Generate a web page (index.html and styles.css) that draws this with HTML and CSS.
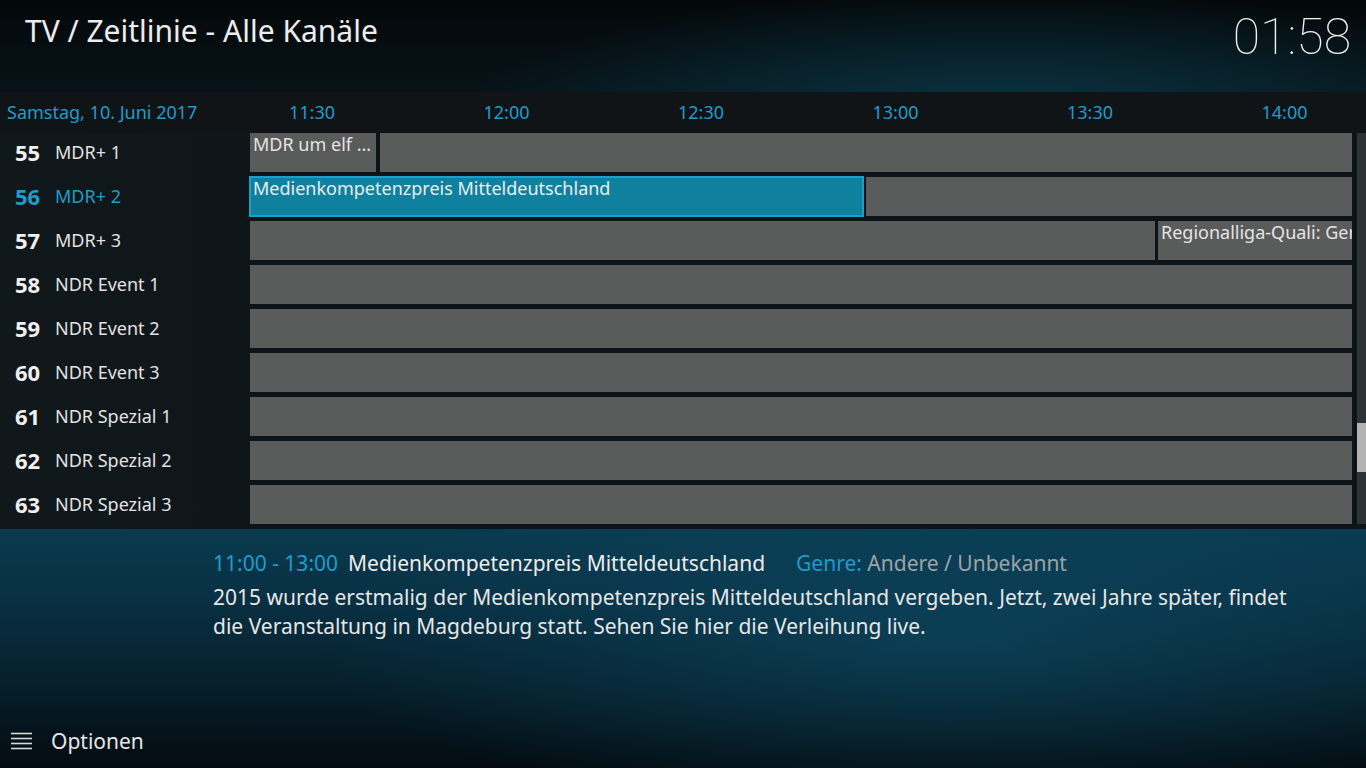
FILE: index.html
```html
<!DOCTYPE html>
<html lang="de">
<head>
<meta charset="utf-8">
<title>TV / Zeitlinie</title>
<link rel="stylesheet" href="styles.css">
</head>
<body>
<div class="screen">
  <header class="top">
    <h1 class="title">TV / Zeitlinie - Alle Kanäle</h1>
    <div class="clock">01:58</div>
  </header>

  <section class="guide">
    <div class="timebar">
      <div class="date">Samstag, 10. Juni 2017</div>
      <div class="times">
        <span>11:30</span><span>12:00</span><span>12:30</span><span>13:00</span><span>13:30</span><span>14:00</span>
      </div>
    </div>
    <div class="body">
      <div class="channels">
        <div class="ch"><b>55</b><span>MDR+ 1</span></div>
        <div class="ch sel"><b>56</b><span>MDR+ 2</span></div>
        <div class="ch"><b>57</b><span>MDR+ 3</span></div>
        <div class="ch"><b>58</b><span>NDR Event 1</span></div>
        <div class="ch"><b>59</b><span>NDR Event 2</span></div>
        <div class="ch"><b>60</b><span>NDR Event 3</span></div>
        <div class="ch"><b>61</b><span>NDR Spezial 1</span></div>
        <div class="ch"><b>62</b><span>NDR Spezial 2</span></div>
        <div class="ch"><b>63</b><span>NDR Spezial 3</span></div>
      </div>
      <div class="grid">
        <div class="row">
          <div class="prog" style="width:126px">MDR um elf ...</div>
          <div class="prog fill"></div>
        </div>
        <div class="row">
          <div class="prog active" style="width:615px">Medienkompetenzpreis Mitteldeutschland</div>
          <div class="prog fill"></div>
        </div>
        <div class="row">
          <div class="prog" style="width:905px"></div>
          <div class="prog fill">Regionalliga-Quali: Ger</div>
        </div>
        <div class="row"><div class="prog fill"></div></div>
        <div class="row"><div class="prog fill"></div></div>
        <div class="row"><div class="prog fill"></div></div>
        <div class="row"><div class="prog fill"></div></div>
        <div class="row"><div class="prog fill"></div></div>
        <div class="row"><div class="prog fill"></div></div>
      </div>
      <div class="scrollbar"><div class="thumb"></div></div>
    </div>
  </section>

  <section class="info">
    <div class="info-head">
      <span class="blue">11:00 - 13:00</span>
      <span class="name">Medienkompetenzpreis Mitteldeutschland</span>
      <span class="genre"><span class="blue">Genre:</span> Andere / Unbekannt</span>
    </div>
    <p class="desc">2015 wurde erstmalig der Medienkompetenzpreis Mitteldeutschland vergeben. Jetzt, zwei Jahre später, findet die Veranstaltung in Magdeburg statt. Sehen Sie hier die Verleihung live.</p>
  </section>

  <footer class="bottom">
    <svg class="menu-icon" width="22" height="18" viewBox="0 0 22 18">
      <g stroke="#d8d8d8" stroke-width="1.6">
        <line x1="0" y1="1.5" x2="21" y2="1.5"/>
        <line x1="0" y1="6.5" x2="21" y2="6.5"/>
        <line x1="0" y1="11.5" x2="21" y2="11.5"/>
        <line x1="0" y1="16.5" x2="21" y2="16.5"/>
      </g>
    </svg>
    <span class="opt">Optionen</span>
  </footer>
</div>
</body>
</html>
```

FILE: styles.css
```css
* { box-sizing: border-box; }
html, body { margin: 0; padding: 0; }
body {
  width: 1366px;
  height: 768px;
  overflow: hidden;
  font-family: "Noto Sans", "Open Sans", sans-serif;
  color: #e6e6e6;
  background: #03080b;
}
.screen {
  width: 1366px;
  height: 768px;
  overflow: hidden;
  display: flex;
  flex-direction: column;
  background:
    radial-gradient(ellipse 900px 260px at 950px 640px, rgba(14, 80, 108, 0.55), rgba(14, 80, 108, 0) 70%),
    linear-gradient(180deg, #0a3a4f 529px, #083043 600px, #06202c 680px, #030b10 768px);
}
.screen > * { flex: none; }
.top {
  height: 92px;
  display: flex;
  justify-content: space-between;
  align-items: flex-start;
  padding: 0 15px 0 25px;
  background:
    radial-gradient(ellipse 700px 160px at 1000px 110px, rgba(10, 62, 80, 0.75), rgba(10, 62, 80, 0) 75%),
    linear-gradient(180deg, #04080a 0%, #071318 100%);
}
.title {
  margin: 10px 0 0;
  font-weight: 400;
  font-size: 30px;
  color: #ececec;
}
.clock {
  margin-top: 8px;
  font-family: Roboto, "Noto Sans", sans-serif;
  font-weight: 100;
  font-size: 50px;
  color: #f0f0f0;
}
.guide {
  height: 437px;
  display: flex;
  flex-direction: column;
  background: #0d1417;
}
.guide > * { flex: none; }
.timebar {
  height: 41px;
  display: flex;
  align-items: center;
  background: #111416;
  color: #1d9dcc;
  font-size: 18px;
  overflow: hidden;
}
.date {
  flex: none;
  width: 289px;
  padding-left: 7px;
  padding-bottom: 1px;
  white-space: nowrap;
}
.times {
  flex: none;
  width: 1077px;
  display: flex;
  padding-bottom: 1px;
  overflow: hidden;
}
.times span {
  flex: none;
  width: 194.5px;
}
.times span:last-child { width: 100px; }
.body {
  height: 396px;
  display: flex;
}
.channels {
  flex: none;
  width: 250px;
  display: flex;
  flex-direction: column;
  background: linear-gradient(90deg, #11181c 0%, #0f161a 100%);
}
.ch {
  height: 44px;
  flex: none;
  display: flex;
  align-items: center;
  padding: 0 0 6px 15px;
  font-size: 18px;
  color: #e2e2e2;
}
.ch b {
  width: 40px;
  font-size: 22px;
  font-weight: 700;
  color: #f0f0f0;
}
.ch.sel, .ch.sel b { color: #1d9dcc; }
.grid {
  flex: none;
  width: 1102px;
  display: flex;
  flex-direction: column;
}
.row {
  height: 44px;
  flex: none;
  display: flex;
  gap: 3px;
}
.row:first-child .prog + .prog { margin-left: 1px; }
.prog {
  height: 39px;
  flex: none;
  background: #5a5b5b;
  color: #e4e4e4;
  font-size: 18px;
  padding: 0 0 0 3px;
  white-space: nowrap;
  overflow: hidden;
  line-height: 22px;
}
.prog.fill { flex: 1; }
.prog.active {
  height: 41px;
  margin: -1px 0 -1px -1px;
  background: #10809f;
  border: 2px solid #1aa0cb;
  padding: 0 0 0 2px;
  color: #e8eef0;
  line-height: 20px;
}
.row:nth-child(2) { gap: 2px; }
.scrollbar {
  flex: none;
  width: 9px;
  margin-left: 5px;
  height: 391px;
  background: #2d3235;
  display: flex;
  flex-direction: column;
  padding-top: 290px;
}
.thumb {
  height: 49px;
  background: #b3b3b3;
}
.info {
  height: 175px;
  padding: 20px 0 0 213px;
  font-size: 21px;
}
.info-head {
  display: flex;
  white-space: nowrap;
}
.blue { color: #1d9dcc; }
.name { margin-left: 10px; color: #ececec; }
.genre { margin-left: 31px; color: #9aa4a8; }
.desc {
  margin: 6px 0 0;
  width: 1095px;
  line-height: 29px;
  color: #e6e6e6;
}
.bottom {
  flex: 1 1 auto !important;
  display: flex;
  align-items: center;
  padding: 10px 0 0 11px;
}
.menu-icon { display: block; }
.opt {
  margin-left: 18px;
  font-size: 21px;
  color: #e6e6e6;
}
```
